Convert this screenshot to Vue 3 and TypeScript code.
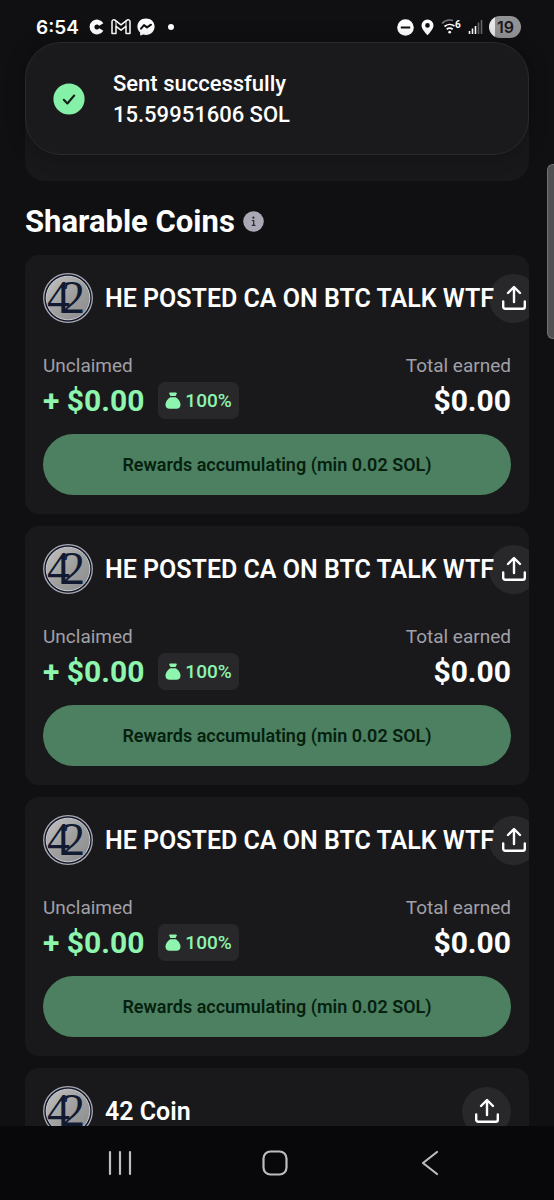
<script setup lang="ts">
interface Coin {
  id: number
  name: string
  unclaimed: string
  share: string
  earned: string
}

const coins: Coin[] = [
  { id: 1, name: 'HE POSTED CA ON BTC TALK WTF', unclaimed: '+ $0.00', share: '100%', earned: '$0.00' },
  { id: 2, name: 'HE POSTED CA ON BTC TALK WTF', unclaimed: '+ $0.00', share: '100%', earned: '$0.00' },
  { id: 3, name: 'HE POSTED CA ON BTC TALK WTF', unclaimed: '+ $0.00', share: '100%', earned: '$0.00' },
  { id: 4, name: '42 Coin', unclaimed: '+ $0.00', share: '100%', earned: '$0.00' },
]
</script>

<template>
  <div class="screen">
    <header class="status">
      <div class="status-left">
        <span class="clock">6:54</span>
        <svg width="16" height="16" viewBox="0 0 16 16" aria-hidden="true">
          <path d="M12.300 5.500A5 5 0 1 0 12.300 10.500" fill="none" stroke="#fff" stroke-width="4.800" />
        </svg>
        <svg width="20" height="16" viewBox="0 0 20 16" aria-hidden="true">
          <path d="M1 14.500V2.600C1 .8 3 .3 4.300 1.300L10 5.800l5.700-4.500C17 .3 19 .8 19 2.600v11.900h-4V7.300l-5 3.900-5-3.900v7.200z" fill="none" stroke="#fff" stroke-width="1.500" stroke-linejoin="round" />
          <path d="M5 7.300V2M15 7.300V2" stroke="#fff" stroke-width="1" />
        </svg>
        <svg width="18" height="18" viewBox="0 0 18 18" aria-hidden="true">
          <path d="M9 .4C4 .4.4 3.900.4 8.600c0 2.400 1 4.500 2.700 6v2.200c0 .5.4.8.9.6l2-.9c1 .3 2 .4 3 .4 5 0 8.600-3.500 8.600-8.300S14 .4 9 .4z" fill="#fff" />
          <path d="M4 10.700l3-3.600 3 2.300 4-2.700" fill="none" stroke="#101012" stroke-width="2" stroke-linejoin="round" stroke-linecap="round" />
        </svg>
        <span class="dot"></span>
      </div>
      <div class="status-right">
        <svg width="17" height="17" viewBox="0 0 17 17" aria-hidden="true">
          <circle cx="8.500" cy="8.500" r="8.300" fill="#fff" />
          <path d="M3.800 8.500h9.400" stroke="#101012" stroke-width="2" />
        </svg>
        <svg width="13" height="17" viewBox="0 0 13 17" aria-hidden="true">
          <path d="M6.500.6A6 6 0 0 0 .5 6.600C.5 10.600 6.500 16.300 6.500 16.300s6-5.700 6-9.700a6 6 0 0 0-6-6z" fill="#fff" />
          <circle cx="6.500" cy="6.400" r="2.300" fill="#101012" />
        </svg>
        <svg width="20" height="16" viewBox="0 0 20 16" aria-hidden="true">
          <path d="M1 4.500a11 11 0 0 1 11-3" fill="none" stroke="#77777a" stroke-width="1.700" />
          <path d="M3.500 7.500a8 8 0 0 1 10-.5M5.700 10.300a5 5 0 0 1 6 0" fill="none" stroke="#fff" stroke-width="1.700" />
          <circle cx="8.700" cy="13.200" r="1.400" fill="#fff" />
          <text x="14" y="8.500" class="wifi-gen">6</text>
        </svg>
        <svg width="15" height="16" viewBox="0 0 15 16" aria-hidden="true">
          <path d="M1.500 15v-3M4.500 15V9.500M7.500 15V7" stroke="#fff" stroke-width="1.600" />
          <path d="M10.500 15V3.500M13.500 15V1" stroke="#66666a" stroke-width="1.600" />
        </svg>
        <span class="battery">19</span>
      </div>
    </header>

    <main class="content">
      <section class="summary"></section>
      <h1 class="heading">
        Sharable Coins
        <button class="info" type="button" aria-label="About sharable coins">
          <svg width="21" height="21" viewBox="0 0 21 21" aria-hidden="true">
            <circle cx="10.500" cy="10.500" r="10.300" fill="#a9a8b4" />
            <circle cx="10.400" cy="6.700" r="1.100" fill="#29282d" />
            <path d="M8.800 9.500h1.900v4.800M8.800 14.300h3.600" fill="none" stroke="#29282d" stroke-width="1.200" />
          </svg>
        </button>
      </h1>

      <ul class="coins">
        <li v-for="coin in coins" :key="coin.id" class="card">
          <div class="card-top">
            <svg class="avatar" width="50" height="50" viewBox="0 0 50 50" role="img" aria-label="Coin logo">
              <defs>
                <linearGradient :id="'metal' + coin.id" x1="0" y1="0" x2="1" y2="1">
                  <stop offset="0" stop-color="#c2c2c3" />
                  <stop offset="0.500" stop-color="#a0a0a1" />
                  <stop offset="1" stop-color="#8a8a8c" />
                </linearGradient>
              </defs>
              <circle cx="25" cy="25" r="24.300" fill="#13182a" stroke="#a9aab2" stroke-width="1.300" />
              <circle cx="25" cy="25" r="21.800" :fill="'url(#metal' + coin.id + ')'" stroke="#c8c9cc" stroke-width="1" />
              <text x="4 19" y="40" class="numeral">42</text>
            </svg>
            <h2 class="name">{{ coin.name }}</h2>
            <button class="share" type="button" :aria-label="'Share ' + coin.name">
              <svg width="26" height="26" viewBox="0 0 26 26" aria-hidden="true">
                <path d="M13 17V2.500M7 8l6-6 6 6M2.200 16.500v5.300a2 2 0 0 0 2 2h17.600a2 2 0 0 0 2-2v-5.300" fill="none" stroke="#fff" stroke-width="2.400" stroke-linecap="round" stroke-linejoin="round" />
              </svg>
            </button>
          </div>
          <div class="labels">
            <span>Unclaimed</span>
            <span>Total earned</span>
          </div>
          <div class="values">
            <span class="unclaimed">{{ coin.unclaimed }}</span>
            <span class="badge">
              <svg width="16" height="18" viewBox="0 0 16 18" aria-hidden="true">
                <path d="M4.200 1.600Q4.200.6 5.200.6h5.600q1 0 1 1L10.600 4H5.400z" fill="#8df5ae" />
                <path d="M5.200 5.200h5.600C13.500 7 15.500 9.800 15.500 12.500c0 3-1.700 4.300-4 4.300h-7c-2.300 0-4-1.300-4-4.300C.5 9.800 2.500 7 5.200 5.200z" fill="#8df5ae" />
              </svg>
              {{ coin.share }}
            </span>
            <span class="earned">{{ coin.earned }}</span>
          </div>
          <button class="claim" type="button" disabled>Rewards accumulating (min 0.02 SOL)</button>
        </li>
      </ul>
    </main>

    <nav class="navbar" aria-label="System">
      <button type="button" aria-label="Recents">
        <svg width="24" height="26" viewBox="0 0 24 26" aria-hidden="true">
          <path d="M2 2v22M12 2v22M22 2v22" stroke="#bdbdbf" stroke-width="2.200" stroke-linecap="round" />
        </svg>
      </button>
      <button type="button" aria-label="Home">
        <svg width="26" height="26" viewBox="0 0 26 26" aria-hidden="true">
          <rect x="1.500" y="1.500" width="23" height="23" rx="7" fill="none" stroke="#bdbdbf" stroke-width="2.200" />
        </svg>
      </button>
      <button type="button" aria-label="Back">
        <svg width="18" height="26" viewBox="0 0 18 26" aria-hidden="true">
          <path d="M16 2L2 13l14 11" fill="none" stroke="#bdbdbf" stroke-width="2.200" stroke-linecap="round" stroke-linejoin="round" />
        </svg>
      </button>
    </nav>

    <div class="toast" role="status">
      <svg width="32" height="32" viewBox="0 0 32 32" aria-hidden="true">
        <circle cx="16" cy="16" r="15.600" fill="#85f0a7" />
        <path d="M10.800 16.800l3.600 3.700 6.800-8" fill="none" stroke="#132019" stroke-width="2.100" stroke-linecap="round" stroke-linejoin="round" />
      </svg>
      <div class="toast-text">
        <div>Sent successfully</div>
        <div>15.59951606 SOL</div>
      </div>
    </div>
    <div class="edge-handle"></div>
  </div>
</template>

<style>
body {
  margin: 0;
  background: #101012;
}
</style>

<style scoped>
.screen {
  position: relative;
  display: flex;
  flex-direction: column;
  height: 100vh;
  overflow: hidden;
  background: #101012;
  color: #fff;
  font-family: Roboto, "Liberation Sans", sans-serif;
}
button {
  margin: 0;
  padding: 0;
  border: 0;
  background: none;
  color: inherit;
  font: inherit;
}
svg {
  display: block;
  flex: none;
}
.status {
  display: flex;
  flex: none;
  align-items: center;
  justify-content: space-between;
  height: 54px;
  padding: 0 33px 0 36px;
}
.status-left,
.status-right {
  display: flex;
  align-items: center;
}
.status-left {
  gap: 6px;
}
.clock {
  margin-right: 4px;
  font-size: 19px;
  font-weight: 600;
  font-family: Inter, Roboto, sans-serif;
}
.dot {
  width: 6px;
  height: 6px;
  margin-left: 7px;
  border-radius: 50%;
  background: #fff;
}
.status-right {
  gap: 7px;
}
.wifi-gen {
  fill: #fff;
  font: 700 10px Roboto, sans-serif;
}
.battery {
  box-sizing: border-box;
  width: 32px;
  margin-left: -1px;
  padding-left: 1px;
  border-radius: 11px;
  background: linear-gradient(to right, #e9e9e9 6px, #929294 6px);
  color: #19191b;
  font: 600 16px/22px Inter, Roboto, sans-serif;
  text-align: center;
}
.content {
  flex: 1;
  min-height: 0;
  overflow: hidden;
  padding: 0 25px;
}
.summary {
  height: 87px;
  margin-top: 40px;
  border-radius: 0 0 20px 20px;
  background: #18181a;
}
.heading {
  display: flex;
  align-items: center;
  gap: 8px;
  height: 40px;
  margin: 20px 0 14px;
  font-size: 31px;
  font-weight: 700;
}
.coins {
  display: flex;
  flex-direction: column;
  gap: 12px;
  margin: 0;
  padding: 0;
  list-style: none;
}
.card {
  overflow: hidden;
  padding: 18px 18px 19px;
  border-radius: 14px;
  background: #19191b;
}
.card-top {
  display: flex;
  align-items: center;
}
.name {
  z-index: 1;
  flex: 1 0 auto;
  margin: 0 0 0 12px;
  padding-top: 2px;
  font-size: 25px;
  font-weight: 600;
  line-height: 32px;
  white-space: nowrap;
}
.numeral {
  fill: #111a30;
  font: 46px "Liberation Serif", serif;
}
.share {
  display: flex;
  flex: none;
  align-items: center;
  justify-content: center;
  width: 49px;
  height: 49px;
  margin-left: -5px;
  border-radius: 50%;
  background: #28282a;
}
.labels {
  display: flex;
  justify-content: space-between;
  margin: 31px 0 4px;
  color: #a1a0a8;
  font-size: 19px;
  line-height: 24px;
}
.values {
  display: flex;
  align-items: center;
  height: 37px;
  margin-bottom: 15px;
  font-size: 30px;
  font-weight: 700;
}
.unclaimed {
  color: #8df5ae;
}
.badge {
  display: flex;
  align-items: center;
  gap: 4px;
  height: 37px;
  margin-left: 14px;
  padding: 0 7px;
  border-radius: 7px;
  background: #28282a;
  color: #8df5ae;
  font-size: 19px;
  font-weight: 500;
}
.earned {
  margin-left: auto;
}
.claim {
  width: 100%;
  height: 61px;
  border-radius: 31px;
  background: #4c8060;
  color: #06200f;
  font-size: 18px;
  font-weight: 600;
}
.navbar {
  display: flex;
  flex: none;
  align-items: center;
  justify-content: space-around;
  height: 74px;
  padding: 0 46px 0 42px;
  background: #08080a;
}
.navbar button {
  display: flex;
  justify-content: center;
  width: 48px;
}
.toast {
  position: absolute;
  top: 42px;
  left: 25px;
  right: 25px;
  display: flex;
  align-items: center;
  gap: 28px;
  box-sizing: border-box;
  height: 113px;
  padding: 0 28px 0 27px;
  border: 1px solid #2a2a2c;
  border-radius: 36px;
  background: #1a1a1c;
  box-shadow: 0 0 20px rgba(0, 0, 0, 0.3);
}
.toast-text {
  font-size: 22px;
  font-weight: 500;
  line-height: 31px;
}
.edge-handle {
  position: absolute;
  top: 164px;
  right: 0;
  box-sizing: border-box;
  width: 7px;
  height: 175px;
  border: 1px solid #737375;
  border-right: 0;
  border-radius: 6px 0 0 6px;
  background: #515153;
}
</style>
